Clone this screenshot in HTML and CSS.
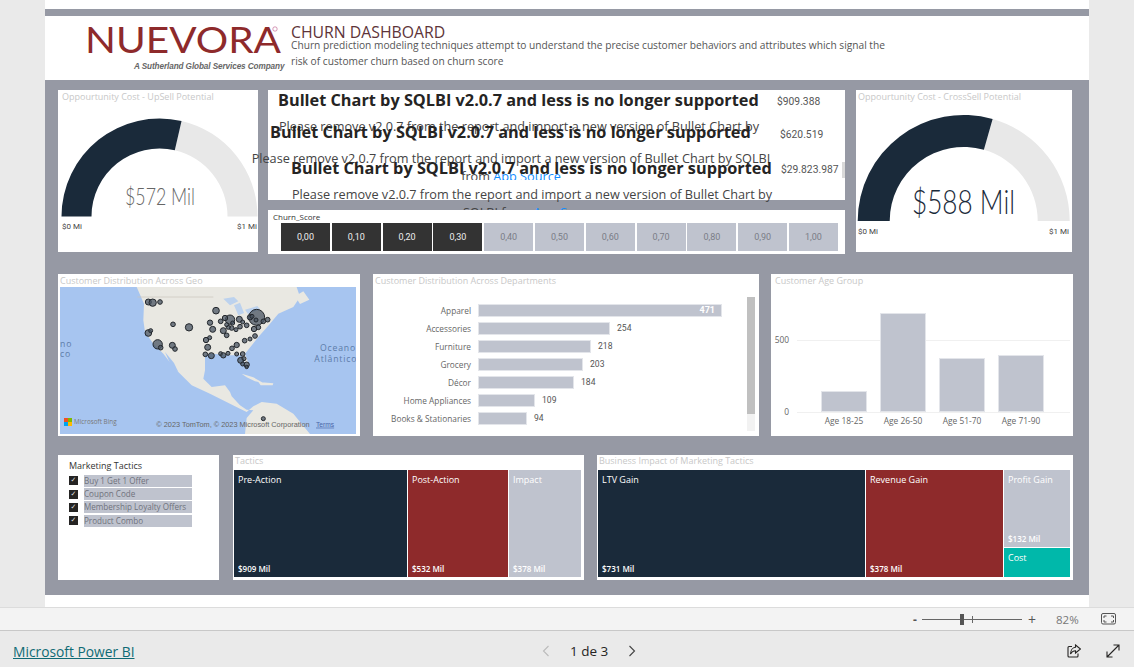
FILE: index.html
```html
<!DOCTYPE html>
<html lang="en">
<head>
  <meta charset="UTF-8" />
  <title>Churn Dashboard</title>
  <link rel="stylesheet" href="styles.css">
</head>
<body>

  <!-- Report page -->
  <main class="report">
    <div class="top-strip"></div>

    <!-- Header -->
    <header class="report-header">
      <div class="logo">
        <svg class="logo-word" width="204" height="32" viewBox="0 0 204 32">
          <text x="0" y="27" textLength="196" lengthAdjust="spacingAndGlyphs">NUEVORA</text>
          <circle cx="190" cy="3" r="2.2"></circle>
        </svg>
        <div class="logo-tag">A Sutherland Global Services Company</div>
      </div>
      <div class="header-text">
        <h1>CHURN DASHBOARD</h1>
        <p>Churn prediction modeling techniques attempt to understand the precise customer behaviors and attributes which signal the risk of customer churn based on churn score</p>
      </div>
    </header>

    <section class="canvas">

      <!-- Row 1 -->
      <div class="row row-one">
        <div class="card gauge gauge-left">
          <div class="card-title">Oppourtunity Cost - UpSell Potential</div>
          <svg width="200" height="162" viewBox="0 0 200 162">
            <path class="arc-rest" d="M123.55 31.01 A98 98 0 0 1 199.5 126.5 L169.5 126.5 A68 68 0 0 0 116.8 60.24 Z"></path>
            <path class="arc-fill" d="M3.5 126.5 A98 98 0 0 1 123.55 31.01 L116.8 60.24 A68 68 0 0 0 33.5 126.5 Z"></path>
            <text class="gauge-value" x="67" y="115" textLength="70" lengthAdjust="spacingAndGlyphs">$572 Mil</text>
            <text class="gauge-min" x="4" y="139">$0 Mi</text>
            <text class="gauge-min" x="199" y="139" text-anchor="end">$1 Mi</text>
          </svg>
        </div>

        <div class="center-col">
          <div class="bullets">
            <div class="bullet-msg msg-one">
              <h3>Bullet Chart by SQLBI v2.0.7 and less is no longer supported</h3>
              <p>Please remove v2.0.7 from the report and import a new version of Bullet Chart by</p>
            </div>
            <div class="bullet-msg msg-two">
              <h3>Bullet Chart by SQLBI v2.0.7 and less is no longer supported</h3>
              <p>Please remove v2.0.7 from the report and import a new version of Bullet Chart by SQLBI from <a>App Source</a></p>
            </div>
            <div class="bullet-msg msg-three">
              <h3>Bullet Chart by SQLBI v2.0.7 and less is no longer supported</h3>
              <p>Please remove v2.0.7 from the report and import a new version of Bullet Chart by SQLBI from <a>App Source</a></p>
            </div>
            <span class="bullet-val val-one">$909.388</span>
            <span class="bullet-val val-two">$620.519</span>
            <span class="bullet-val val-three">$29.823.987</span>
            <span class="bullet-scroll"></span>
          </div>

          <div class="score-slicer">
            <div class="score-label">Churn_Score</div>
            <div class="score-buttons">
              <span class="score on">0,00</span>
              <span class="score on">0,10</span>
              <span class="score on">0,20</span>
              <span class="score on">0,30</span>
              <span class="score">0,40</span>
              <span class="score">0,50</span>
              <span class="score">0,60</span>
              <span class="score">0,70</span>
              <span class="score">0,80</span>
              <span class="score">0,90</span>
              <span class="score">1,00</span>
            </div>
          </div>
        </div>

        <div class="card gauge gauge-right">
          <div class="card-title">Oppourtunity Cost - CrossSell Potential</div>
          <svg width="216" height="162" viewBox="0 0 216 162">
            <path class="arc-rest" d="M136.64 29.03 A106 106 0 0 1 213.7 131 L181.7 131 A74 74 0 0 0 127.9 59.81 Z"></path>
            <path class="arc-fill" d="M1.7 131 A106 106 0 0 1 136.64 29.03 L127.9 59.81 A74 74 0 0 0 33.7 131 Z"></path>
            <text class="gauge-value big" x="56" y="124" textLength="103" lengthAdjust="spacingAndGlyphs">$588 Mil</text>
            <text class="gauge-min" x="2" y="144">$0 Mi</text>
            <text class="gauge-min" x="213" y="144" text-anchor="end">$1 Mi</text>
          </svg>
        </div>
      </div>

      <!-- Row 2 -->
      <div class="row row-two">
        <div class="card map-card">
          <div class="card-title">Customer Distribution Across Geo</div>
          <div class="map">
            <svg width="296" height="147" viewBox="30 57 888 441">
              <rect x="30" y="57" width="888" height="441" class="sea"></rect>
              <path class="land" d="M260 57 L282 107 L280 157 L285 192 L310 227 L340 257 L355 277 L385 312 L425 352 L480 377 L540 407 L570 422 L590 432 L610 415 L635 402 L680 407 L730 437 L780 498 L585 498 L590 450 L610 427 L590 425 L570 412 L545 385 L540 372 L525 352 L485 357 L460 332 L465 307 L465 262 L485 257 L540 262 L575 262 L590 297 L597 290 L585 257 L625 207 L660 167 L685 137 L730 117 L750 87 L740 57 Z"></path>
              <path class="sea" d="M345 252 L362 290 L385 312 L372 285 Z"></path>
              <path class="lake" d="M520 92 L552 87 L565 100 L540 112 Z M552 112 L570 104 L582 135 L565 142 Z M585 125 L622 114 L630 124 L594 138 Z"></path>
              <path class="land" d="M575 317 L610 328 L640 345 L615 340 L590 328 Z M625 342 L670 346 L668 352 L632 352 Z M735 85 L760 70 L778 95 L750 108 Z"></path>
              <path class="border" d="M262 87 L490 87"></path>
              <g class="bubbles">
                <circle cx="620" cy="148" r="24"></circle>
                <circle cx="540" cy="155" r="14"></circle>
                <circle cx="323" cy="229" r="14"></circle>
                <circle cx="295" cy="102" r="9"></circle>
                <circle cx="308" cy="104" r="11"></circle>
                <circle cx="330" cy="102" r="7"></circle>
                <circle cx="498" cy="128" r="10"></circle>
                <circle cx="600" cy="148" r="8"></circle>
                <circle cx="525" cy="150" r="8"></circle>
                <circle cx="512" cy="160" r="7"></circle>
                <circle cx="568" cy="154" r="9"></circle>
                <circle cx="480" cy="164" r="8"></circle>
                <circle cx="369" cy="169" r="7"></circle>
                <circle cx="417" cy="178" r="11"></circle>
                <circle cx="488" cy="184" r="9"></circle>
                <circle cx="520" cy="188" r="9"></circle>
                <circle cx="530" cy="202" r="7"></circle>
                <circle cx="295" cy="195" r="10"></circle>
                <circle cx="302" cy="188" r="6"></circle>
                <circle cx="332" cy="239" r="7"></circle>
                <circle cx="367" cy="232" r="9"></circle>
                <circle cx="375" cy="243" r="7"></circle>
                <circle cx="468" cy="216" r="8"></circle>
                <circle cx="479" cy="209" r="6"></circle>
                <circle cx="473" cy="238" r="9"></circle>
                <circle cx="466" cy="259" r="7"></circle>
                <circle cx="484" cy="263" r="9"></circle>
                <circle cx="512" cy="257" r="6"></circle>
                <circle cx="520" cy="262" r="8"></circle>
                <circle cx="534" cy="256" r="6"></circle>
                <circle cx="546" cy="241" r="7"></circle>
                <circle cx="560" cy="231" r="8"></circle>
                <circle cx="584" cy="218" r="7"></circle>
                <circle cx="600" cy="213" r="6"></circle>
                <circle cx="615" cy="204" r="7"></circle>
                <circle cx="560" cy="258" r="6"></circle>
                <circle cx="578" cy="258" r="7"></circle>
                <circle cx="572" cy="277" r="9"></circle>
                <circle cx="582" cy="272" r="6"></circle>
                <circle cx="578" cy="288" r="6"></circle>
                <circle cx="590" cy="290" r="8"></circle>
                <circle cx="590" cy="297" r="5"></circle>
                <circle cx="640" cy="160" r="7"></circle>
                <circle cx="653" cy="155" r="7"></circle>
                <circle cx="625" cy="178" r="7"></circle>
                <circle cx="612" cy="183" r="8"></circle>
                <circle cx="590" cy="172" r="7"></circle>
                <circle cx="570" cy="176" r="7"></circle>
                <circle cx="558" cy="185" r="6"></circle>
                <circle cx="545" cy="180" r="7"></circle>
                <circle cx="535" cy="178" r="6"></circle>
                <circle cx="548" cy="165" r="6"></circle>
                <circle cx="578" cy="162" r="6"></circle>
                <circle cx="618" cy="156" r="6"></circle>
                <circle cx="606" cy="145" r="6"></circle>
                <circle cx="530" cy="170" r="6"></circle>
                <circle cx="640" cy="452" r="6"></circle>
              </g>
              <text class="sea-label" x="918" y="250" text-anchor="end">Oceano</text>
              <text class="sea-label" x="793" y="282">Atlântico</text>
              <text class="sea-label" x="30" y="236">no</text>
              <text class="sea-label" x="30" y="267">co</text>
              <rect x="42" y="450" width="12" height="12" fill="#f25022"></rect>
              <rect x="54" y="450" width="12" height="12" fill="#7fba00"></rect>
              <rect x="42" y="462" width="12" height="12" fill="#00a4ef"></rect>
              <rect x="54" y="462" width="12" height="12" fill="#ffb900"></rect>
              <text class="bing" x="72" y="468">Microsoft Bing</text>
              <text class="attrib" x="319" y="476">© 2023 TomTom, © 2023 Microsoft Corporation</text>
              <text class="attrib terms" x="798" y="476">Terms</text>
            </svg>
          </div>
        </div>

        <div class="card dept-card">
          <div class="card-title">Customer Distribution Across Departments</div>
          <div class="dept-rows">
            <div class="dept-row"><span class="dept-name">Apparel</span><span class="dept-bar" style="width:244px"><em>471</em></span></div>
            <div class="dept-row"><span class="dept-name">Accessories</span><span class="dept-bar" style="width:132px"></span><span class="dept-val">254</span></div>
            <div class="dept-row"><span class="dept-name">Furniture</span><span class="dept-bar" style="width:113px"></span><span class="dept-val">218</span></div>
            <div class="dept-row"><span class="dept-name">Grocery</span><span class="dept-bar" style="width:105px"></span><span class="dept-val">203</span></div>
            <div class="dept-row"><span class="dept-name">Décor</span><span class="dept-bar" style="width:96px"></span><span class="dept-val">184</span></div>
            <div class="dept-row"><span class="dept-name">Home Appliances</span><span class="dept-bar" style="width:57px"></span><span class="dept-val">109</span></div>
            <div class="dept-row"><span class="dept-name">Books &amp; Stationaries</span><span class="dept-bar" style="width:49px"></span><span class="dept-val">94</span></div>
          </div>
          <div class="dept-scroll"><div class="dept-thumb"></div></div>
        </div>

        <div class="card age-card">
          <div class="card-title">Customer Age Group</div>
          <div class="age-plot">
            <span class="age-tick tick-500">500</span>
            <span class="age-tick tick-0">0</span>
            <span class="age-grid"></span>
            <div class="age-col"><span class="age-bar" style="height:21px"></span><span class="age-name">Age 18-25</span></div>
            <div class="age-col"><span class="age-bar" style="height:99px"></span><span class="age-name">Age 26-50</span></div>
            <div class="age-col"><span class="age-bar" style="height:54px"></span><span class="age-name">Age 51-70</span></div>
            <div class="age-col"><span class="age-bar" style="height:57px"></span><span class="age-name">Age 71-90</span></div>
          </div>
        </div>
      </div>

      <!-- Row 3 -->
      <div class="row row-three">
        <div class="card tactic-slicer">
          <div class="slicer-title">Marketing Tactics</div>
          <div class="check-row"><span class="check">&#10003;</span><span class="check-label">Buy 1 Get 1 Offer</span></div>
          <div class="check-row"><span class="check">&#10003;</span><span class="check-label">Coupon Code</span></div>
          <div class="check-row"><span class="check">&#10003;</span><span class="check-label">Membership Loyalty Offers</span></div>
          <div class="check-row"><span class="check">&#10003;</span><span class="check-label">Product Combo</span></div>
        </div>

        <div class="card tree-card tactics">
          <div class="tree-title">Tactics</div>
          <div class="tree">
            <div class="cell navy"><b>Pre-Action</b><i>$909 Mil</i></div>
            <div class="cell red"><b>Post-Action</b><i>$532 Mil</i></div>
            <div class="cell pale"><b>Impact</b><i>$378 Mil</i></div>
          </div>
        </div>

        <div class="card tree-card impact">
          <div class="tree-title">Business Impact of Marketing Tactics</div>
          <div class="tree">
            <div class="cell navy"><b>LTV Gain</b><i>$731 Mil</i></div>
            <div class="cell red"><b>Revenue Gain</b><i>$378 Mil</i></div>
            <div class="cell-stack">
              <div class="cell pale"><b>Profit Gain</b><i>$132 Mil</i></div>
              <div class="cell teal"><b>Cost</b></div>
            </div>
          </div>
        </div>
      </div>
    </section>

    <div class="canvas-foot"></div>
  </main>

  <!-- Zoom bar -->
  <div class="zoom-bar">
    <span class="zoom-minus">-</span>
    <span class="zoom-track"><span class="zoom-tick"></span><span class="zoom-thumb"></span></span>
    <span class="zoom-plus">+</span>
    <span class="zoom-pct">82%</span>
    <svg class="fit-icon" width="16" height="12" viewBox="0 0 16 12">
      <rect x="0.5" y="0.5" width="14" height="10.5" rx="1.5"></rect>
      <path d="M3 5 V3 H5.5 M10 3 H12.5 V5 M12.5 7 V9 H10 M5.5 9 H3 V7"></path>
    </svg>
  </div>

  <!-- Footer -->
  <footer class="footer">
    <a class="pbi-link">Microsoft Power BI</a>
    <div class="pager">
      <svg class="chev off" width="8" height="12" viewBox="0 0 8 12"><path d="M6.5 1 L1.5 6 L6.5 11"></path></svg>
      <span>1 de 3</span>
      <svg class="chev" width="8" height="12" viewBox="0 0 8 12"><path d="M1.5 1 L6.5 6 L1.5 11"></path></svg>
    </div>
    <div class="foot-icons">
      <svg class="foot-icon" width="14" height="14" viewBox="0 0 14 14">
        <path d="M5 2.5 H2 A1 1 0 0 0 1 3.5 V12 A1 1 0 0 0 2 13 H10 A1 1 0 0 0 11 12 V9.5"></path>
        <path d="M8.5 1 L13.5 5 L8.5 9 V6.8 C6 6.8 4.5 8 3.5 10 C3.5 6.5 5.5 3.6 8.5 3.3 Z"></path>
      </svg>
      <svg class="foot-icon" width="14" height="14" viewBox="0 0 14 14">
        <path d="M1 13 L13 1 M7.5 1 H13 V6.5 M1 7.5 V13 H6.5"></path>
      </svg>
    </div>
  </footer>

</body>
</html>
```

FILE: styles.css
```css
/* Page */
html, body {
  margin: 0;
  padding: 0;
}
body {
  width: 1134px;
  height: 667px;
  overflow: hidden;
  background-color: #eaeaea;
  font-family: "Open Sans", "Noto Sans", sans-serif;
  color: #333;
}
.report {
  width: 1044px;
  height: 607px;
  margin-left: 45px;
  background-color: #fff;
}
.top-strip {
  height: 7px;
  border-top: 9px solid #fff;
  background-color: #9699a4;
}

/* Header */
.report-header {
  display: flex;
  height: 64px;
}
.logo {
  width: 206px;
  padding: 10px 0 0 40px;
}
.logo-word {
  display: block;
}
.logo-word text {
  font-family: "Lato", sans-serif;
  font-size: 36px;
  fill: #8e2a2b;
}
.logo-word circle {
  fill: none;
  stroke: #b58;
  stroke-width: 0.6;
}
.logo-tag {
  margin: 4px 0 0 49px;
  font-family: "Liberation Sans", sans-serif;
  font-size: 8.2px;
  font-style: italic;
  font-weight: bold;
  color: #666;
  white-space: nowrap;
  letter-spacing: -0.1px;
}
.header-text {
  width: 600px;
  padding-top: 7px;
}
.header-text h1 {
  margin: 0;
  font-size: 15.8px;
  line-height: 18px;
  font-weight: 400;
  color: #5e3439;
}
.header-text p {
  margin: -4px 0 0;
  font-size: 10.2px;
  line-height: 16px;
  color: #555;
}

/* Canvas and rows */
.canvas {
  height: 505px;
  padding: 10px 0 0 13px;
  background-color: #9699a4;
}
.canvas-foot {
  height: 12px;
}
.row {
  display: flex;
  align-items: flex-start;
}
.row-one {
  height: 164px;
}
.row-two {
  margin-top: 20px;
}
.row-three {
  margin-top: 19px;
}
.card {
  position: relative;
  background-color: #fff;
  flex: none;
}
.card-title {
  padding-left: 4px;
  font-size: 9px;
  line-height: 13px;
  color: #c8c8c8;
  white-space: nowrap;
}

/* Gauges */
.gauge {
  height: 162px;
}
.gauge svg {
  position: absolute;
  left: 0;
  top: 0;
}
.gauge-left {
  width: 200px;
}
.gauge-right {
  width: 216px;
  margin-left: 11px;
}
.gauge-right .card-title {
  padding-left: 2px;
}
.arc-fill {
  fill: #1a2a3a;
}
.arc-rest {
  fill: #e8e8e8;
}
.gauge-value {
  font-family: "Lato", sans-serif;
  font-weight: 300;
  font-size: 23px;
  fill: #666;
}
.gauge-value.big {
  font-size: 33px;
  fill: #1a2a3a;
}
.gauge-min {
  font-family: "Roboto", sans-serif;
  font-size: 8px;
  fill: #444;
}

/* Bullet chart error messages */
.center-col {
  width: 577px;
  margin-left: 10px;
  flex: none;
}
.bullets {
  position: relative;
  height: 110px;
  background-color: #fff;
}
.bullet-msg {
  position: absolute;
  width: 520px;
  overflow: hidden;
}
.bullet-msg h3 {
  margin: 0;
  width: 481px;
  font-size: 16.3px;
  line-height: 20px;
  font-weight: 700;
  color: #252423;
  white-space: nowrap;
}
.bullet-msg p {
  margin: 8px 0 0;
  font-size: 12.7px;
  line-height: 17.5px;
  text-align: center;
  color: #444;
}
.bullet-msg a {
  color: #118dff;
}
.msg-one {
  left: 10px;
  top: 0;
  width: 482px;
  height: 46px;
}
.msg-two {
  left: -17px;
  top: 32px;
  height: 58px;
}
.msg-two h3 {
  margin-left: 19px;
}
.msg-three {
  left: 23px;
  top: 68px;
  width: 482px;
  height: 58px;
}
.bullet-val {
  position: absolute;
  font-family: "Roboto", sans-serif;
  font-size: 10.3px;
  line-height: 14px;
  color: #555;
  white-space: nowrap;
}
.val-one {
  left: 509px;
  top: 5px;
}
.val-two {
  left: 512px;
  top: 38px;
}
.val-three {
  left: 513px;
  top: 73px;
}
.bullet-scroll {
  position: absolute;
  right: 0;
  top: 72px;
  width: 3px;
  height: 16px;
  background-color: #d9d9d9;
}

/* Churn score slicer */
.score-slicer {
  position: relative;
  height: 44px;
  margin-top: 10px;
  background-color: #fff;
}
.score-label {
  padding: 1px 0 0 5px;
  font-size: 8px;
  line-height: 11px;
  color: #333;
}
.score-buttons {
  display: flex;
  gap: 1.8px;
  margin: 1px 0 0 13px;
}
.score {
  width: 49px;
  height: 28px;
  font-family: "Roboto", sans-serif;
  font-size: 9px;
  line-height: 28px;
  text-align: center;
  background-color: #bfc3ce;
  color: #7a7d87;
}
.score.on {
  background-color: #333;
  color: #eee;
}

/* Map */
.map-card {
  width: 302px;
  height: 162px;
}
.map-card .card-title {
  padding-left: 2px;
}
.map {
  height: 147px;
  margin: 0 2px;
}
.map svg {
  display: block;
}
.sea {
  fill: #a7c5f0;
}
.land {
  fill: #e9e8e2;
}
.lake {
  fill: #bcd2ee;
}
.border {
  fill: none;
  stroke: #c8c4bc;
  stroke-width: 2;
}
.bubbles circle {
  fill: rgba(72, 84, 98, 0.75);
  stroke: #23272c;
  stroke-width: 3;
}
.sea-label {
  font-family: "Open Sans", sans-serif;
  font-size: 26px;
  letter-spacing: 2.5px;
  fill: #5d7ca8;
}
.bing {
  font-family: "Open Sans", sans-serif;
  font-size: 19px;
  fill: #777;
}
.attrib {
  font-family: "Liberation Sans", sans-serif;
  font-size: 22px;
  fill: #666;
}
.attrib.terms {
  font-size: 20px;
  fill: #4a66a8;
  text-decoration: underline;
}

/* Department bars */
.dept-card {
  width: 386px;
  height: 162px;
  margin-left: 13px;
}
.dept-card .card-title {
  padding-left: 2px;
}
.dept-rows {
  margin-top: 14px;
}
.dept-row {
  display: flex;
  align-items: center;
  height: 18px;
  font-size: 8.3px;
  color: #666;
}
.dept-name {
  width: 98px;
  flex: none;
  text-align: right;
  white-space: nowrap;
}
.dept-bar {
  position: relative;
  height: 13px;
  margin-left: 7px;
  background-color: #bfc3ce;
  outline: 1px solid #e3e5ea;
  outline-offset: -1px;
}
.dept-bar em {
  position: absolute;
  right: 7px;
  top: 0;
  font-family: "Roboto", sans-serif;
  font-style: normal;
  font-weight: 700;
  font-size: 9px;
  line-height: 13px;
  color: #fff;
}
.dept-val {
  margin-left: 7px;
  font-family: "Roboto", sans-serif;
  font-size: 8.6px;
  color: #555;
}
.dept-scroll {
  position: absolute;
  left: 374px;
  top: 23px;
  width: 8px;
  height: 134px;
  background-color: #f2f2f2;
}
.dept-thumb {
  height: 117px;
  background-color: #c0c0c0;
}

/* Age columns */
.age-card {
  width: 302px;
  height: 162px;
  margin-left: 12px;
}
.age-plot {
  position: relative;
  display: flex;
  gap: 13px;
  align-items: flex-end;
  height: 126px;
  margin: 0 3px 0 26px;
  padding-left: 24px;
  box-sizing: border-box;
  border-bottom: 1px solid #f0f0f0;
}
.age-col {
  position: relative;
  display: flex;
  flex-direction: column;
  align-items: center;
  width: 46px;
}
.age-bar {
  width: 46px;
  background-color: #bfc3ce;
  outline: 1px solid #e3e5ea;
  outline-offset: -1px;
}
.age-name {
  position: absolute;
  top: 100%;
  margin-top: 3px;
  font-size: 8.4px;
  line-height: 12px;
  color: #666;
  white-space: nowrap;
}
.age-grid {
  position: absolute;
  left: 0;
  right: 0;
  bottom: 71px;
  height: 1px;
  background-color: #f0f0f0;
}
.age-tick {
  position: absolute;
  right: 100%;
  margin-right: 8px;
  font-size: 8.4px;
  line-height: 12px;
  color: #666;
}
.tick-500 {
  bottom: 66px;
}
.tick-0 {
  bottom: -6px;
}

/* Marketing tactics slicer */
.tactic-slicer {
  width: 161px;
  height: 125px;
  padding: 4px 0 0 11px;
  box-sizing: border-box;
}
.slicer-title {
  font-size: 9px;
  line-height: 13px;
  color: #333;
  margin-bottom: 2px;
}
.check-row {
  display: flex;
  align-items: center;
  height: 13.4px;
}
.check {
  width: 9px;
  height: 9px;
  background-color: #252423;
  color: #ddd;
  font-family: "DejaVu Sans", sans-serif;
  font-size: 7px;
  line-height: 9px;
  text-align: center;
}
.check-label {
  width: 108px;
  height: 12px;
  margin-left: 6px;
  font-size: 8.1px;
  line-height: 12px;
  background-color: #bfc3ce;
  color: #6f727c;
  white-space: nowrap;
  overflow: hidden;
}

/* Treemaps */
.tree-card {
  height: 125px;
}
.tactics {
  width: 351px;
  margin-left: 14px;
  padding: 0 3px 0 1px;
  box-sizing: border-box;
}
.impact {
  width: 476px;
  margin-left: 13px;
  padding: 0 3px 0 1px;
  box-sizing: border-box;
}
.tree-title {
  height: 15px;
  padding-left: 1px;
  font-size: 9px;
  line-height: 11px;
  color: #c8c8c8;
  white-space: nowrap;
}
.tree {
  display: flex;
  gap: 1px;
  height: 107px;
}
.cell {
  position: relative;
  box-sizing: border-box;
  padding: 3px 4px;
  color: #fff;
  font-size: 9px;
  line-height: 13px;
}
.cell b {
  display: block;
  font-weight: 500;
}
.cell i {
  position: absolute;
  left: 4px;
  bottom: 3px;
  font-style: normal;
  font-weight: 600;
  font-size: 8px;
  line-height: 11px;
}
.navy {
  background-color: #1a2a3a;
}
.red {
  background-color: #8e2a2b;
}
.pale {
  background-color: #bfc3ce;
}
.teal {
  background-color: #00b8aa;
}
.tactics .navy { width: 173px; }
.tactics .red { width: 100px; }
.tactics .pale { width: 72px; }
.impact .navy { width: 267px; }
.impact .red { width: 137px; }
.cell-stack {
  display: flex;
  flex-direction: column;
  gap: 1px;
  width: 66px;
}
.cell-stack .pale {
  height: 77px;
}
.cell-stack .teal {
  height: 29px;
}

/* Zoom bar */
.zoom-bar {
  display: flex;
  align-items: center;
  height: 22px;
  border-top: 1px solid #dcdcdc;
  border-bottom: 1px solid #c8c8c8;
  background-color: #f3f3f3;
  color: #555;
  font-size: 12px;
}
.zoom-minus {
  margin-left: 913px;
  width: 9px;
  font-weight: 700;
}
.zoom-track {
  position: relative;
  width: 100px;
  height: 1px;
  background-color: #666;
}
.zoom-thumb {
  position: absolute;
  left: 38px;
  top: -5px;
  width: 4px;
  height: 11px;
  background-color: #555;
}
.zoom-tick {
  position: absolute;
  left: 50px;
  top: -3px;
  width: 1px;
  height: 7px;
  background-color: #666;
}
.zoom-plus {
  margin-left: 6px;
  width: 14px;
  font-size: 14px;
}
.zoom-pct {
  margin-left: 14px;
  width: 31px;
  font-size: 11.5px;
  color: #777;
}
.fit-icon {
  margin-left: 14px;
  fill: none;
  stroke: #555;
}

/* Footer */
.footer {
  position: relative;
  display: flex;
  align-items: center;
  height: 32px;
  padding: 4px 0 0 13px;
  font-size: 13px;
}
.pbi-link {
  width: 120px;
  font-size: 13.8px;
  color: #0f6a75;
  text-decoration: underline;
  white-space: nowrap;
}
.pager {
  display: flex;
  align-items: center;
  gap: 20px;
  margin-left: 409px;
  color: #252423;
  font-size: 13.5px;
}
.chev {
  fill: none;
  stroke: #444;
  stroke-width: 1.1;
}
.chev.off {
  stroke: #bbb;
}
.foot-icons {
  display: flex;
  gap: 25px;
  margin-left: auto;
  margin-right: 14px;
}
.foot-icon {
  fill: none;
  stroke: #252423;
  stroke-width: 1.1;
}
```
